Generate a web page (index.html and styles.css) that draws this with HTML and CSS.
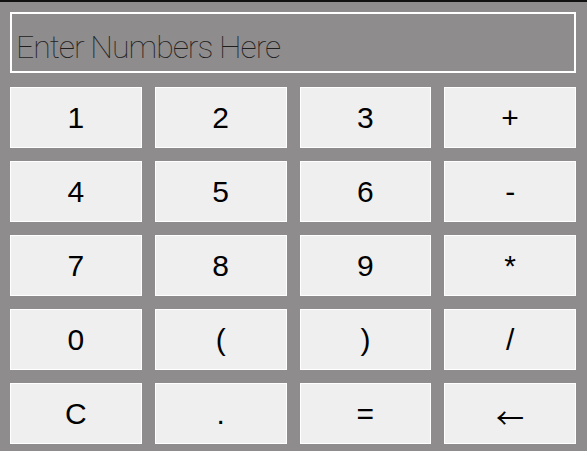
FILE: index.html
```html
<!DOCTYPE html>
<html>
<head>
<meta charset="utf-8">
<link rel="stylesheet" href="styles.css">
</head>
<body>
<div class="calc">
  <input class="display" type="text" placeholder="Enter Numbers Here">
  <div class="keys">
    <button class="key">1</button>
    <button class="key">2</button>
    <button class="key">3</button>
    <button class="key">+</button>
    <button class="key">4</button>
    <button class="key">5</button>
    <button class="key">6</button>
    <button class="key">-</button>
    <button class="key">7</button>
    <button class="key">8</button>
    <button class="key">9</button>
    <button class="key">*</button>
    <button class="key">0</button>
    <button class="key">(</button>
    <button class="key">)</button>
    <button class="key">/</button>
    <button class="key">C</button>
    <button class="key">.</button>
    <button class="key">=</button>
    <button class="key key-back">&larr;</button>
  </div>
</div>
</body>
</html>
```
FILE: styles.css
```css
html, body {
  margin: 0;
  padding: 0;
  background: #8e8c8d;
  height: 100%;
}
body {
  border-top: 2px solid #111;
  box-sizing: border-box;
}
.calc {
  padding: 10px 11px 0 10px;
  display: flex;
  flex-direction: column;
  gap: 14px;
}
.display {
  box-sizing: border-box;
  height: 61px;
  width: 100%;
  margin: 0;
  border: 2px solid #fff;
  background: #8e8c8d;
  padding: 8px 4px 0 4px;
  font-family: "Roboto", sans-serif;
  font-weight: 100;
  font-size: 32px;
  letter-spacing: -1px;
  color: #222;
  outline: none;
}
.display::placeholder {
  color: #1e1e1e;
  opacity: 1;
}
.keys {
  display: grid;
  grid-template-columns: repeat(4, 1fr);
  grid-auto-rows: 61px;
  column-gap: 13px;
  row-gap: 13px;
}
.key {
  box-sizing: border-box;
  margin: 0;
  border: 1px solid #fff;
  background: #efefef;
  font-family: "Liberation Sans", Arial, sans-serif;
  font-size: 30px;
  color: #000;
  padding: 0;
}
.key-back {
  font-family: "Noto Sans CJK SC", "Liberation Sans", sans-serif;
  font-size: 28px;
  padding-top: 6px;
}
```
